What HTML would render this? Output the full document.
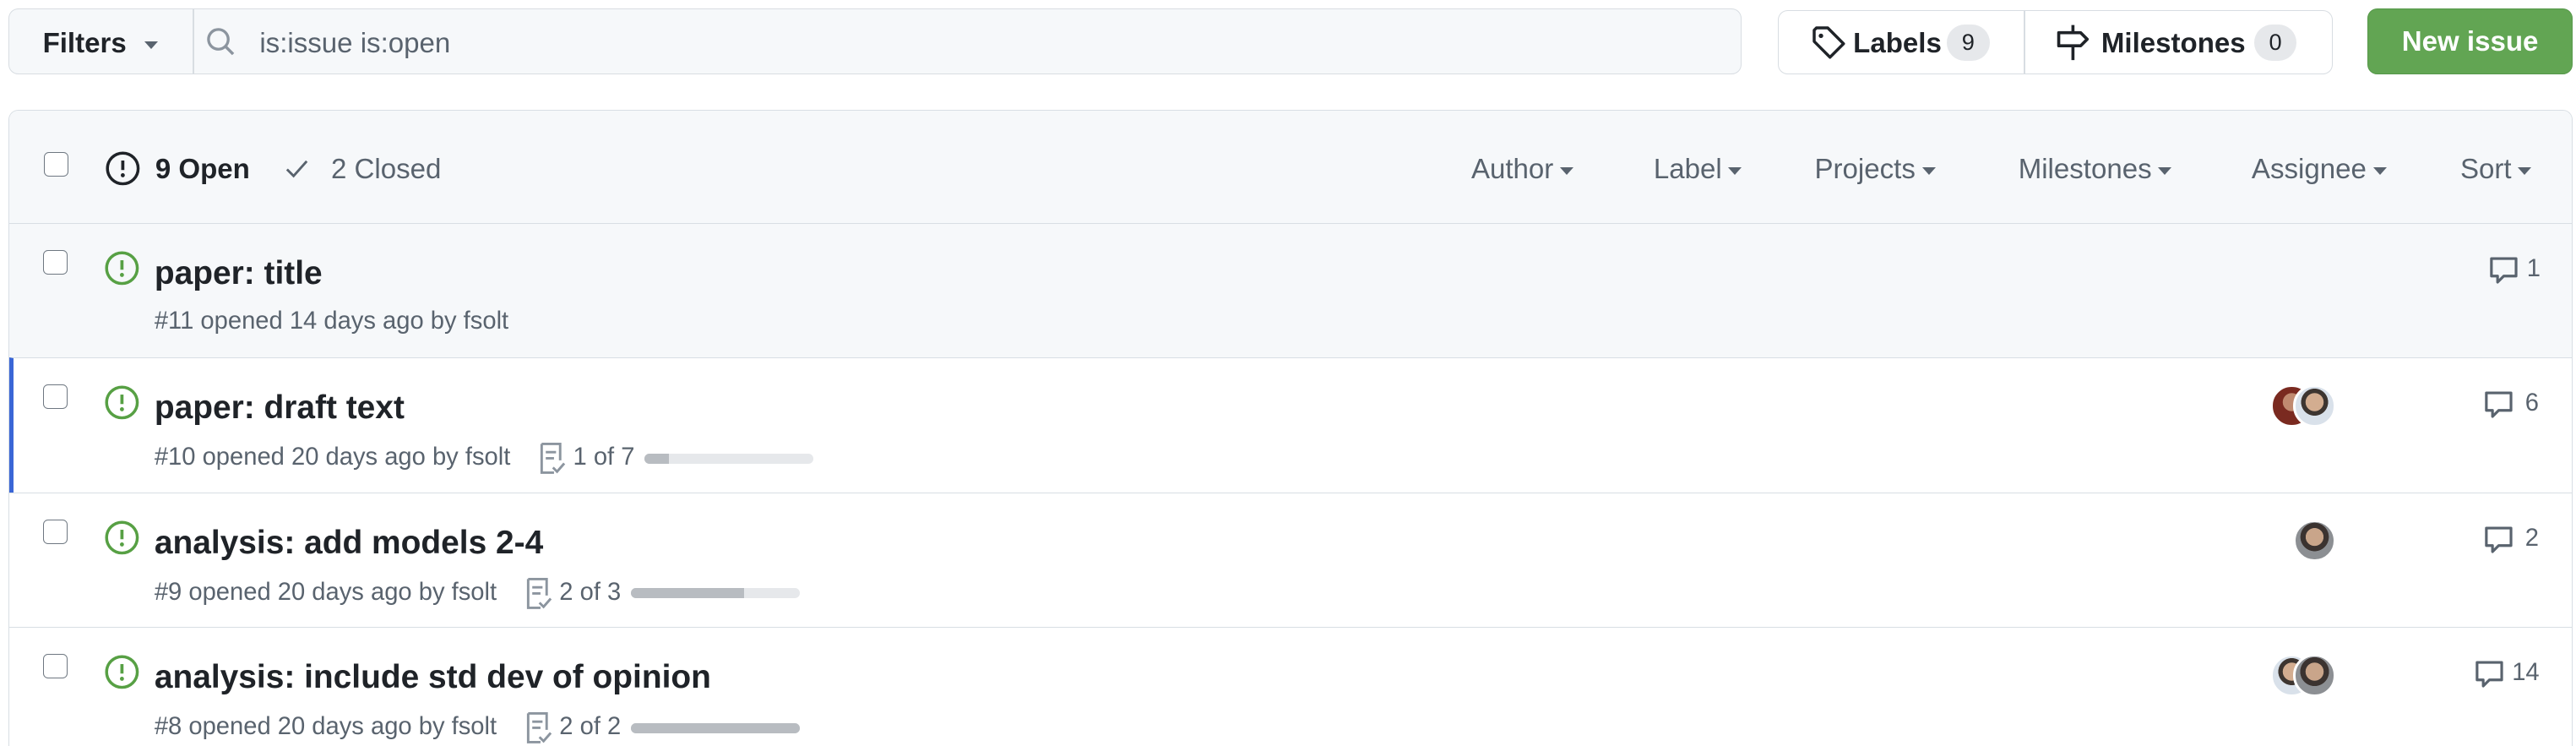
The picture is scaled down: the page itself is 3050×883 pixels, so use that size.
<!DOCTYPE html>
<html><head><meta charset="utf-8"><style>
html,body{margin:0;padding:0;background:#fff;overflow:hidden}
#w{width:1568px;height:454px;zoom:1.9452;position:relative;font-family:"Liberation Sans",sans-serif;color:#1f2328}
.abs{position:absolute}
.btn{position:absolute;border:1px solid #d8dde2;border-radius:6px;box-sizing:border-box}
.car{display:inline-block;width:0;height:0;border-left:4.5px solid transparent;border-right:4.5px solid transparent;border-top:5px solid currentColor;vertical-align:middle;margin-left:4px}
.cb{position:absolute;left:26px;width:15px;height:15px;border:1px solid #6e7781;border-radius:3px;box-sizing:border-box;background:#fff}
.row{position:absolute;left:5px;width:1561px;height:82px;border-top:1px solid #d8dee4;box-sizing:border-box}
.t{position:absolute;left:89px;top:19px;font-size:20px;font-weight:bold}
.m{position:absolute;left:89px;top:51px;font-size:15px;color:#59636e;white-space:nowrap}
.ico{position:absolute;left:59px;top:16px}
.cm{position:absolute;top:19px;font-size:15px;color:#59636e}
.bar{display:inline-block;height:6px;border-radius:3px;background:#e6e8eb;vertical-align:middle;position:relative;overflow:hidden;margin-left:6px}
.bar i{position:absolute;left:0;top:0;bottom:0;background:#b8bcc1}
.av{position:absolute;width:26px;height:26px;border-radius:50%;border:2px solid #fff;box-sizing:border-box;background:radial-gradient(circle at 50% 40%,#c9a58a 0 30%,#3b3330 31% 48%,#8c8f93 49%)}
.hd{position:absolute;top:26px;font-size:17px;color:#59636e}
</style></head><body><div id="w">
<div class="btn" style="left:5px;top:5px;width:1055px;height:40px;background:#f6f8fa"></div>
<div class="abs" style="left:117px;top:5px;width:1px;height:40px;background:#d8dde2"></div>
<div class="abs" style="left:26px;top:17px;font-size:17px;font-weight:bold">Filters <span class="car" style="color:#59636e;margin-left:6px"></span></div>
<svg class="abs" style="left:125px;top:16px" width="20" height="20" viewBox="0 0 20 20"><circle cx="8" cy="8" r="6" fill="none" stroke="#8c959f" stroke-width="1.7"/><path d="M12.5 12.5 17 17" stroke="#8c959f" stroke-width="1.8"/></svg>
<div class="abs" style="left:158px;top:17px;font-size:17px;color:#59636e">is:issue is:open</div>

<div class="btn" style="left:1082px;top:6px;width:338px;height:39px;background:#fff"></div>
<div class="abs" style="left:1232px;top:6px;width:1px;height:39px;background:#d8dde2"></div>
<svg class="abs" style="left:1102px;top:15px" width="22" height="22" viewBox="0 0 16 16"><path d="M1.5 2.5v5l7 7 6-6-7-7h-5z" fill="none" stroke="#1f2328" stroke-width="1.3" stroke-linejoin="round"/><circle cx="4.5" cy="5" r="1" fill="#1f2328"/></svg>
<div class="abs" style="left:1128px;top:17px;font-size:17px;font-weight:bold">Labels</div>
<div class="abs" style="left:1185px;top:15px;width:26px;height:22px;border-radius:11px;background:#e6e8eb;font-size:14px;text-align:center;line-height:22px">9</div>
<svg class="abs" style="left:1251px;top:14px" width="22" height="24" viewBox="0 0 16 18"><path d="M8 1v3M8 11v6" stroke="#1f2328" stroke-width="1.4"/><path d="M1.5 4.5h10l3 3-3 3h-10z" fill="none" stroke="#1f2328" stroke-width="1.4" stroke-linejoin="round"/></svg>
<div class="abs" style="left:1279px;top:17px;font-size:17px;font-weight:bold">Milestones</div>
<div class="abs" style="left:1372px;top:15px;width:26px;height:22px;border-radius:11px;background:#e6e8eb;font-size:14px;text-align:center;line-height:22px">0</div>

<div class="abs" style="left:1441px;top:5px;width:125px;height:40px;border-radius:6px;background:#62a553;border:1px solid #56984a;box-sizing:border-box;color:#fff;font-size:17px;font-weight:bold;text-align:center;line-height:40px">New issue</div>

<div class="abs" style="left:5px;top:67px;width:1561px;height:400px;border:1px solid #d8dee4;border-radius:6px;box-sizing:border-box;background:#fff;overflow:hidden">
 <div class="abs" style="left:0;top:0;width:100%;height:69px;background:#f6f8fa"></div>
 <div class="cb" style="left:21px;top:25px"></div>
 <svg class="abs" style="left:58px;top:24px" width="22" height="22" viewBox="0 0 16 16"><circle cx="8" cy="8" r="6.8" fill="none" stroke="#1f2328" stroke-width="1.3"/><path d="M8 4.5v4.2" stroke="#1f2328" stroke-width="1.4"/><circle cx="8" cy="11" r=".9" fill="#1f2328"/></svg>
 <div class="hd" style="left:89px;color:#1f2328;font-weight:bold">9 Open</div>
 <svg class="abs" style="left:166px;top:27px" width="18" height="16" viewBox="0 0 16 16"><path d="M2 8.5l4 4 8-9" fill="none" stroke="#59636e" stroke-width="1.5"/></svg>
 <div class="hd" style="left:196px">2 Closed</div>
 <div class="hd" style="left:890px">Author<span class="car"></span></div>
 <div class="hd" style="left:1001px">Label<span class="car"></span></div>
 <div class="hd" style="left:1099px">Projects<span class="car"></span></div>
 <div class="hd" style="left:1223px">Milestones<span class="car"></span></div>
 <div class="hd" style="left:1365px">Assignee<span class="car"></span></div>
 <div class="hd" style="left:1492px">Sort<span class="car"></span></div>

 <div class="row" style="top:68px;background:#f6f8fa;left:0"></div>
 <div class="row" style="top:150px;left:0;border-left:3px solid #3a66d6"></div>
 <div class="row" style="top:232px;left:0"></div>
 <div class="row" style="top:314px;left:0"></div>
</div>

<div class="abs" style="left:0;top:136px;width:1568px;height:82px">
 <div class="cb" style="top:16px"></div>
 <svg class="ico" style="left:63px" width="22" height="22" viewBox="0 0 16 16"><circle cx="8" cy="8" r="6.8" fill="none" stroke="#57a044" stroke-width="1.3"/><path d="M8 4.5v4.2" stroke="#57a044" stroke-width="1.4"/><circle cx="8" cy="11" r=".9" fill="#57a044"/></svg>
 <div class="t" style="left:94px">paper: title</div>
 <div class="m" style="left:94px">#11 opened 14 days ago by fsolt</div>
 <svg class="abs" style="left:1514px;top:18px" width="20" height="20" viewBox="0 0 16 16"><path d="M2 2.5h12v8.5H8l-3 3v-3H2z" fill="none" stroke="#59636e" stroke-width="1.3" stroke-linejoin="round"/></svg>
 <div class="cm" style="left:1538px">1</div>
</div>
<div class="abs" style="left:0;top:218px;width:1568px;height:82px">
 <div class="cb" style="top:16px"></div>
 <svg class="ico" style="left:63px" width="22" height="22" viewBox="0 0 16 16"><circle cx="8" cy="8" r="6.8" fill="none" stroke="#57a044" stroke-width="1.3"/><path d="M8 4.5v4.2" stroke="#57a044" stroke-width="1.4"/><circle cx="8" cy="11" r=".9" fill="#57a044"/></svg>
 <div class="t" style="left:94px">paper: draft text</div>
 <div class="m" style="left:94px">#10 opened 20 days ago by fsolt <svg style="vertical-align:middle;margin:0 4px 0 12px" width="18" height="20" viewBox="0 0 14 16"><path d="M2 1h9v8M2 1v14h6" fill="none" stroke="#8c959f" stroke-width="1.2"/><path d="M4 5h5M4 8h4M7.5 12.5l2 2 3.5-4" fill="none" stroke="#8c959f" stroke-width="1.2"/></svg>1 of 7<span class="bar" style="width:103px"><i style="width:15px"></i></span></div>
 <div class="av" style="left:1382px;top:16px;background:radial-gradient(circle at 50% 40%,#c08a70 0 30%,#7a2a20 31%)"></div>
 <div class="av" style="left:1396px;top:16px;background:radial-gradient(circle at 50% 40%,#d3ad90 0 30%,#3d3530 31% 45%,#d9e1ea 46%)"></div>
 <svg class="abs" style="left:1511px;top:18px" width="20" height="20" viewBox="0 0 16 16"><path d="M2 2.5h12v8.5H8l-3 3v-3H2z" fill="none" stroke="#59636e" stroke-width="1.3" stroke-linejoin="round"/></svg>
 <div class="cm" style="left:1537px">6</div>
</div>
<div class="abs" style="left:0;top:300px;width:1568px;height:82px">
 <div class="cb" style="top:16px"></div>
 <svg class="ico" style="left:63px" width="22" height="22" viewBox="0 0 16 16"><circle cx="8" cy="8" r="6.8" fill="none" stroke="#57a044" stroke-width="1.3"/><path d="M8 4.5v4.2" stroke="#57a044" stroke-width="1.4"/><circle cx="8" cy="11" r=".9" fill="#57a044"/></svg>
 <div class="t" style="left:94px">analysis: add models 2-4</div>
 <div class="m" style="left:94px">#9 opened 20 days ago by fsolt <svg style="vertical-align:middle;margin:0 4px 0 12px" width="18" height="20" viewBox="0 0 14 16"><path d="M2 1h9v8M2 1v14h6" fill="none" stroke="#8c959f" stroke-width="1.2"/><path d="M4 5h5M4 8h4M7.5 12.5l2 2 3.5-4" fill="none" stroke="#8c959f" stroke-width="1.2"/></svg>2 of 3<span class="bar" style="width:103px"><i style="width:69px"></i></span></div>
 <div class="av" style="left:1396px;top:16px"></div>
 <svg class="abs" style="left:1511px;top:18px" width="20" height="20" viewBox="0 0 16 16"><path d="M2 2.5h12v8.5H8l-3 3v-3H2z" fill="none" stroke="#59636e" stroke-width="1.3" stroke-linejoin="round"/></svg>
 <div class="cm" style="left:1537px">2</div>
</div>
<div class="abs" style="left:0;top:382px;width:1568px;height:82px">
 <div class="cb" style="top:16px"></div>
 <svg class="ico" style="left:63px" width="22" height="22" viewBox="0 0 16 16"><circle cx="8" cy="8" r="6.8" fill="none" stroke="#57a044" stroke-width="1.3"/><path d="M8 4.5v4.2" stroke="#57a044" stroke-width="1.4"/><circle cx="8" cy="11" r=".9" fill="#57a044"/></svg>
 <div class="t" style="left:94px">analysis: include std dev of opinion</div>
 <div class="m" style="left:94px">#8 opened 20 days ago by fsolt <svg style="vertical-align:middle;margin:0 4px 0 12px" width="18" height="20" viewBox="0 0 14 16"><path d="M2 1h9v8M2 1v14h6" fill="none" stroke="#8c959f" stroke-width="1.2"/><path d="M4 5h5M4 8h4M7.5 12.5l2 2 3.5-4" fill="none" stroke="#8c959f" stroke-width="1.2"/></svg>2 of 2<span class="bar" style="width:103px"><i style="width:103px"></i></span></div>
 <div class="av" style="left:1382px;top:16px;background:radial-gradient(circle at 50% 40%,#d3ad90 0 30%,#3d3530 31% 45%,#d9e1ea 46%)"></div>
 <div class="av" style="left:1396px;top:16px"></div>
 <svg class="abs" style="left:1505px;top:18px" width="20" height="20" viewBox="0 0 16 16"><path d="M2 2.5h12v8.5H8l-3 3v-3H2z" fill="none" stroke="#59636e" stroke-width="1.3" stroke-linejoin="round"/></svg>
 <div class="cm" style="left:1529px">14</div>
</div>
</div></body></html>
